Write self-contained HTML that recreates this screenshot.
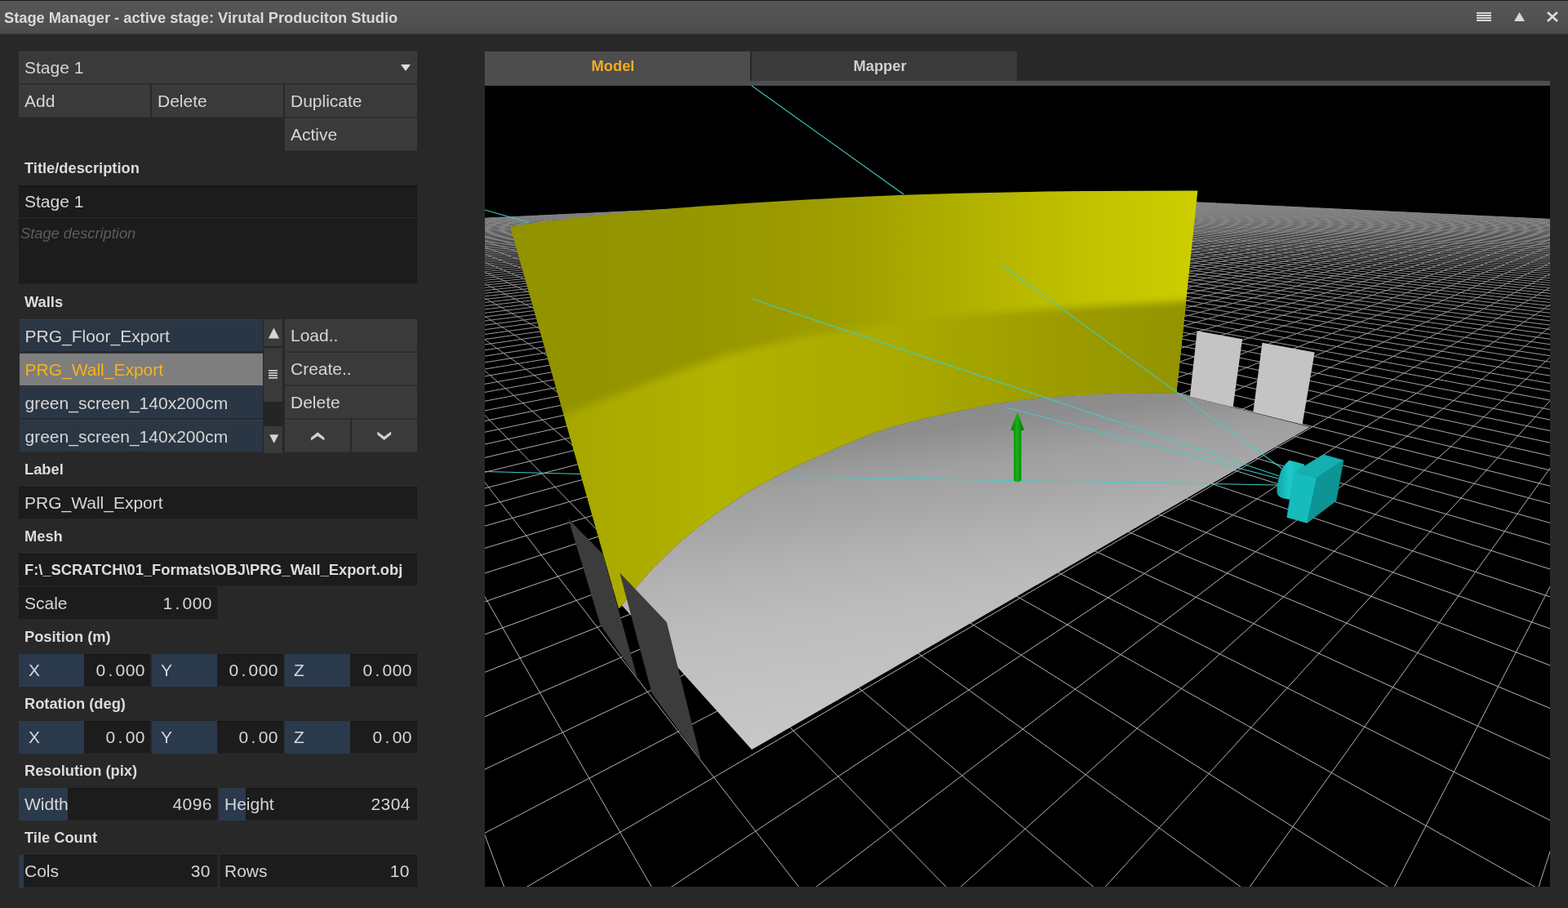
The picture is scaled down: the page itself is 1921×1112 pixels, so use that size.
<!DOCTYPE html>
<html><head><meta charset="utf-8"><title>Stage Manager</title>
<style>
*{box-sizing:border-box;margin:0;padding:0}
html,body{width:1921px;height:1112px;overflow:hidden;background:#282828}
body{position:relative;will-change:transform;-webkit-font-smoothing:antialiased;font-family:"Liberation Sans",sans-serif;font-size:21px;color:#d6d6d6}
.abs,.btn,.inp,.lbl,.li,.cell{position:absolute;white-space:pre;overflow:hidden}
#titlebar{left:0;top:0;width:1921px;height:41px;background:linear-gradient(#575757,#4c4c4c);border-top:1px solid #1a1a1a;box-shadow:0 1px 1px #3a3a3a}
#titlebar .t{position:absolute;left:5px;top:0;line-height:41px;font-weight:bold;font-size:18.3px;color:#dadada}
.btn{height:40px;line-height:39px;background:#3a3a3a;padding-left:7px;box-shadow:inset 0 1px 0 #414141,inset 0 -1px 0 #313131}
.inp{height:40px;line-height:39px;background:#1c1c1c;padding-left:7px;box-shadow:inset 0 1px 1px #171717,inset 0 -1px 0 #252525}
.lbl{left:30px;height:41px;line-height:40px;font-weight:bold;font-size:18.3px;color:#dcdcdc}
.li{left:24px;width:298px;height:40px;line-height:40px;background:#2b3644;padding-left:6.5px;border-top:1px solid #323e4d;border-bottom:1px solid #222b36}
.li.sel{background:#7e7e7e;color:#f7b21a;border-color:#2b3644 #7e7e7e #7e7e7e}
.cell{height:39px;line-height:39px}
.cell.b{height:40px}
.cell.b{background:#2a3a4c}
.num{text-align:right;padding-right:6px;padding-left:0}
.d{display:inline-block;width:12px;text-align:center}
.n{letter-spacing:.45px}
svg{position:absolute;display:block}
</style></head><body>
<div id="titlebar" class="abs"><span class="t">Stage Manager - active stage: Virutal Produciton Studio</span>
<svg style="left:1808px;top:12px" width="104" height="16" viewBox="0 0 104 16">
<g fill="#d8d8d8"><rect x="1" y="2" width="18" height="2"/><rect x="1" y="5" width="18" height="2"/><rect x="1" y="8" width="18" height="2"/><rect x="1" y="11" width="18" height="2"/>
<path d="M47 13 L53.5 2 L60 13Z"/></g>
<path d="M88 2 L100 13 M100 2 L88 13" stroke="#dcdcdc" stroke-width="2.6" fill="none"/></svg>
</div>

<!-- stage selector -->
<div class="btn" style="left:23px;top:63px;width:488px">Stage 1</div>
<svg style="left:490px;top:78px" width="14" height="10" viewBox="0 0 14 10"><path d="M1 1 L13 1 L7 9Z" fill="#dcdcdc"/></svg>
<div class="btn" style="left:23px;top:104px;width:161px">Add</div>
<div class="btn" style="left:186px;top:104px;width:161px">Delete</div>
<div class="btn" style="left:349px;top:104px;width:162px">Duplicate</div>
<div class="btn" style="left:349px;top:145px;width:162px">Active</div>

<div class="lbl" style="top:186px">Title/description</div>
<div class="inp" style="left:23px;top:227px;width:488px">Stage 1</div>
<div class="inp" style="left:23px;top:268px;width:488px;height:80px;padding-left:2px;line-height:36px;font-style:italic;font-size:18.3px;color:#5c5c5c">Stage description</div>

<div class="lbl" style="top:350px">Walls</div>
<div class="li" style="top:391px">PRG_Floor_Export</div>
<div class="li sel" style="top:432px">PRG_Wall_Export</div>
<div class="li" style="top:473px">green_screen_140x200cm</div>
<div class="li" style="top:514px">green_screen_140x200cm</div>
<!-- scrollbar -->
<div class="abs" style="left:322px;top:391px;width:25px;height:164px;background:#252525"></div>
<div class="abs" style="left:323px;top:391px;width:23px;height:33px;background:#3a3a3a"></div>
<div class="abs" style="left:323px;top:426px;width:23px;height:66px;background:#3a3a3a"></div>
<div class="abs" style="left:323px;top:522px;width:23px;height:33px;background:#3a3a3a"></div>
<svg style="left:323px;top:391px" width="23" height="164" viewBox="0 0 23 164">
<g fill="#d4d4d4"><path d="M5.8 23.5 L12.5 10.5 L19.2 23.5Z"/><path d="M7.2 141.3 L18.2 141.3 L12.7 152Z"/>
<rect x="6" y="62" width="11" height="1.6"/><rect x="6" y="65" width="11" height="1.6"/><rect x="6" y="68" width="11" height="1.6"/><rect x="6" y="71" width="11" height="1.6"/></g></svg>

<div class="btn" style="left:349px;top:391px;width:162px">Load..</div>
<div class="btn" style="left:349px;top:432px;width:162px">Create..</div>
<div class="btn" style="left:349px;top:473px;width:162px">Delete</div>
<div class="btn" style="left:349px;top:514px;width:80px"></div>
<div class="btn" style="left:431px;top:514px;width:80px"></div>
<svg style="left:349px;top:514px" width="162" height="39" viewBox="0 0 162 39"><g fill="#d2d2d2"><path d="M31.9 21.9L40.2 15.2L48.4 21.9L48.4 25.4L40.2 19.9L31.9 25.4Z"/><path d="M113.3 14.4L121.6 20.7L130.1 14.4L130.1 18.3L121.6 25.1L113.3 18.3Z"/></g></svg>

<div class="lbl" style="top:555px">Label</div>
<div class="inp" style="left:23px;top:596px;width:488px">PRG_Wall_Export</div>
<div class="lbl" style="top:637px">Mesh</div>
<div class="inp" style="left:23px;top:678px;width:488px;font-weight:bold;font-size:18.3px;line-height:40px;color:#dcdcdc">F:\_SCRATCH\01_Formats\OBJ\PRG_Wall_Export.obj</div>

<div class="inp" style="left:23px;top:719px;width:243px">Scale</div>
<div class="cell num n" style="left:103px;top:719px;width:163px">1<span class="d">.</span>000</div>

<div class="lbl" style="top:760px">Position (m)</div>
<div class="cell b" style="left:23px;top:801px;width:80px;padding-left:12px">X</div>
<div class="inp num n" style="left:103px;top:801px;width:81px">0<span class="d">.</span>000</div>
<div class="cell b" style="left:186px;top:801px;width:80px;padding-left:11px">Y</div>
<div class="inp num n" style="left:266px;top:801px;width:81px">0<span class="d">.</span>000</div>
<div class="cell b" style="left:349px;top:801px;width:80px;padding-left:11px">Z</div>
<div class="inp num n" style="left:429px;top:801px;width:82px">0<span class="d">.</span>000</div>

<div class="lbl" style="top:842px">Rotation (deg)</div>
<div class="cell b" style="left:23px;top:883px;width:80px;padding-left:12px">X</div>
<div class="inp num n" style="left:103px;top:883px;width:81px">0<span class="d">.</span>00</div>
<div class="cell b" style="left:186px;top:883px;width:80px;padding-left:11px">Y</div>
<div class="inp num n" style="left:266px;top:883px;width:81px">0<span class="d">.</span>00</div>
<div class="cell b" style="left:349px;top:883px;width:80px;padding-left:11px">Z</div>
<div class="inp num n" style="left:429px;top:883px;width:82px">0<span class="d">.</span>00</div>

<div class="lbl" style="top:924px">Resolution (pix)</div>
<div class="inp" style="left:23px;top:965px;width:243px"></div>
<div class="cell b" style="left:23px;top:965px;width:60px"></div>
<div class="cell" style="left:30px;top:965px;width:100px">Width</div>
<div class="cell num n" style="left:103px;top:965px;width:163px">4096</div>
<div class="inp" style="left:268px;top:965px;width:243px"></div>
<div class="cell b" style="left:268px;top:965px;width:33px"></div>
<div class="cell" style="left:275px;top:965px;width:100px">Height</div>
<div class="cell num n" style="left:349px;top:965px;width:162px;padding-right:8px">2304</div>

<div class="lbl" style="top:1006px">Tile Count</div>
<div class="inp" style="left:23px;top:1047px;width:243px"></div>
<div class="cell b" style="left:23px;top:1047px;width:6px"></div>
<div class="cell" style="left:30px;top:1047px;width:100px">Cols</div>
<div class="cell num n" style="left:103px;top:1047px;width:163px;padding-right:8px">30</div>
<div class="inp" style="left:270px;top:1047px;width:241px;padding-left:5px">Rows</div>
<div class="cell num n" style="left:349px;top:1047px;width:162px;padding-right:9px">10</div>

<!-- tabs -->
<div class="abs" style="left:594px;top:63px;width:325px;height:39px;background:#4d4d4d;text-align:center;padding-right:11px;line-height:35px;font-weight:bold;font-size:18.3px;color:#f5ae1e">Model</div>
<div class="abs" style="left:921px;top:63px;width:325px;height:36px;background:#3a3a3a;text-align:center;padding-right:11px;line-height:35px;font-weight:bold;font-size:18.3px;color:#d0d0d0">Mapper</div>
<div class="abs" style="left:594px;top:99px;width:1305px;height:6px;background:#4d4d4d"></div>
<!-- viewport -->
<svg style="left:594px;top:105px" width="1305" height="981" viewBox="594 105 1305 981">
<defs>
<linearGradient id="gf" gradientUnits="userSpaceOnUse" x1="81.8" y1="624.7" x2="133.7" y2="1021.3"><stop offset="0" stop-color="#8a8a8a"/><stop offset=".1" stop-color="#8d8d8d"/><stop offset=".175" stop-color="#999"/><stop offset=".225" stop-color="#a0a0a0"/><stop offset=".3" stop-color="#a5a5a5"/><stop offset=".425" stop-color="#b0b0b0"/><stop offset=".51" stop-color="#b6b6b6"/><stop offset=".61" stop-color="#bcbcbc"/><stop offset=".8" stop-color="#c2c2c2"/><stop offset="1" stop-color="#c8c8c8"/></linearGradient>
<linearGradient id="gw" gradientUnits="userSpaceOnUse" x1="625" y1="0" x2="1467" y2="0"><stop offset="0" stop-color="#929200"/><stop offset=".3" stop-color="#969600"/><stop offset=".5" stop-color="#a0a000"/><stop offset=".7" stop-color="#b4b400"/><stop offset=".85" stop-color="#c3c300"/><stop offset="1" stop-color="#cdcd00"/></linearGradient>
<linearGradient id="gs" gradientUnits="userSpaceOnUse" x1="625" y1="0" x2="1467" y2="0"><stop offset="0" stop-color="#a2a200"/><stop offset=".3" stop-color="#b2b200"/><stop offset=".55" stop-color="#aaaa00"/><stop offset=".8" stop-color="#9c9c00"/><stop offset="1" stop-color="#929200"/></linearGradient>
<linearGradient id="gl" gradientUnits="userSpaceOnUse" x1="1566" y1="0" x2="1596" y2="0"><stop offset="0" stop-color="#12a8a8"/><stop offset=".45" stop-color="#1ccaca"/><stop offset="1" stop-color="#16b8b8"/></linearGradient>
<linearGradient id="ga" gradientUnits="userSpaceOnUse" x1="1241" y1="0" x2="1252" y2="0"><stop offset="0" stop-color="#0a8a0a"/><stop offset=".45" stop-color="#14b414"/><stop offset="1" stop-color="#0a860a"/></linearGradient>
<linearGradient id="gg" gradientUnits="userSpaceOnUse" x1="0" y1="240" x2="0" y2="700"><stop offset="0" stop-color="#848484"/><stop offset=".1" stop-color="#868686"/><stop offset=".3" stop-color="#939393"/><stop offset=".6" stop-color="#a8a8a8"/><stop offset="1" stop-color="#b2b2b2"/></linearGradient>
<clipPath id="cw"><path d="M625.0 277.5L670.0 271.0L715.0 265.6L760.0 260.8L800.0 257.0L860.0 252.6L925.0 248.2L988.0 244.5L1050.0 241.2L1107.5 238.8L1175.0 236.8L1280.0 234.5L1328.6 234.0L1400.0 233.8L1467.3 233.6L1441.3 481.3L1409.0 481.3L1386.0 481.5L1364.0 482.0L1341.0 483.0L1318.0 484.0L1295.0 485.5L1272.0 487.5L1250.0 490.0L1228.0 493.0L1205.0 497.0L1183.0 501.5L1160.0 506.5L1138.0 511.0L1116.0 516.5L1090.0 523.5L1064.0 532.5L1040.0 542.5L1012.0 554.5L985.0 566.5L960.0 578.5L937.9 590.5L918.1 601.3L898.3 614.2L878.5 628.1L858.7 642.9L838.9 658.7L819.2 676.6L799.4 696.3L779.6 719.1L762.0 741.5L758 745Z"/></clipPath>
<filter id="bl" x="-10%" y="-20%" width="120%" height="140%"><feGaussianBlur stdDeviation="5"/></filter>
</defs>
<rect x="594" y="105" width="1305" height="981" fill="#000"/>
<path d="M1233.9 236.8L1903.0 268.6M1229.4 237.0L1903.0 269.3M1224.8 237.2L1903.0 270.1M1220.2 237.4L1903.0 270.9M1215.5 237.7L1903.0 271.6M1210.8 237.9L1903.0 272.4M1206.1 238.1L1903.0 273.2M1201.3 238.3L1903.0 274.1M1196.4 238.6L1903.0 274.9M1191.5 238.8L1903.0 275.8M1186.6 239.0L1903.0 276.7M1181.6 239.3L1903.0 277.6M1176.6 239.5L1903.0 278.5M1171.5 239.8L1903.0 279.4M1166.3 240.0L1903.0 280.4M1161.1 240.3L1903.0 281.4M1155.9 240.5L1903.0 282.4M1150.5 240.8L1903.0 283.4M1145.2 241.0L1903.0 284.5M1139.8 241.3L1903.0 285.5M1134.3 241.5L1903.0 286.6M1128.7 241.8L1903.0 287.8M1123.1 242.1L1903.0 288.9M1117.5 242.3L1903.0 290.1M1111.8 242.6L1903.0 291.3M1106.0 242.9L1903.0 292.6M1100.1 243.2L1903.0 293.8M1094.2 243.4L1903.0 295.1M1088.3 243.7L1903.0 296.5M1082.2 244.0L1903.0 297.8M1076.1 244.3L1903.0 299.3M1069.9 244.6L1903.0 300.7M1063.7 244.9L1903.0 302.2M1057.4 245.2L1903.0 303.7M1051.0 245.5L1903.0 305.3M1044.5 245.8L1903.0 306.9M1038.0 246.1L1903.0 308.6M1031.3 246.4L1903.0 310.3M1024.7 246.7L1903.0 312.1M1017.9 247.1L1903.0 313.9M1011.0 247.4L1903.0 315.8M1004.1 247.7L1903.0 317.7M997.1 248.1L1903.0 319.7M990.0 248.4L1903.0 321.8M982.8 248.7L1903.0 323.9M975.5 249.1L1903.0 326.1M968.1 249.4L1903.0 328.4M960.7 249.8L1903.0 330.8M953.1 250.1L1903.0 333.2M945.5 250.5L1903.0 335.7M937.7 250.9L1903.0 338.3M929.9 251.2L1903.0 341.1M921.9 251.6L1903.0 343.9M913.9 252.0L1903.0 346.8M905.8 252.4L1903.0 349.8M897.5 252.8L1903.0 353.0M889.1 253.2L1903.0 356.3M880.7 253.6L1903.0 359.7M872.1 254.0L1903.0 363.3M863.4 254.4L1903.0 367.0M854.6 254.8L1903.0 370.9M845.6 255.3L1903.0 375.0M836.6 255.7L1903.0 379.3M827.4 256.1L1903.0 383.8M818.1 256.6L1903.0 388.5M808.6 257.0L1903.0 393.4M799.1 257.5L1903.0 398.6M789.3 257.9L1903.0 404.0M779.5 258.4L1903.0 409.8M769.5 258.9L1903.0 415.8M759.4 259.4L1903.0 422.3M749.1 259.8L1903.0 429.1M738.7 260.3L1903.0 436.3M728.1 260.8L1903.0 443.9M717.3 261.4L1903.0 452.1M706.4 261.9L1903.0 460.8M695.4 262.4L1903.0 470.1M684.1 262.9L1903.0 480.1M672.7 263.5L1903.0 490.8M661.1 264.0L1903.0 502.4M649.4 264.6L1903.0 514.9M637.4 265.2L1903.0 528.4M625.3 265.7L1903.0 543.1M613.0 266.3L1903.0 559.2M600.4 266.9L1903.0 576.8M590.0 268.1L1903.0 596.2M590.0 272.1L1903.0 617.7M590.0 276.6L1903.0 641.5M590.0 281.7L1903.0 668.2M590.0 287.4L1903.0 698.2M590.0 293.8L1903.0 732.3M590.0 301.2L1903.0 771.3M590.0 309.7L1903.0 816.4M590.0 319.7L1903.0 869.1M590.0 331.4L1903.0 931.5M590.0 345.6L1903.0 1006.6M590.0 363.0L1887.6 1090.0M590.0 384.8L1706.5 1090.0M590.0 413.0L1525.3 1090.0M590.0 450.9L1344.1 1090.0M590.0 504.4L1162.9 1090.0M590.0 585.6L981.7 1090.0M590.0 723.9L800.4 1090.0M590.0 1011.9L619.1 1090.0M1233.9 236.8L590.0 267.4M1238.4 237.0L590.0 268.1M1242.9 237.2L590.0 268.9M1247.5 237.4L590.0 269.6M1252.1 237.7L590.0 270.4M1256.8 237.9L590.0 271.2M1261.5 238.1L590.0 272.0M1266.2 238.3L590.0 272.8M1271.0 238.6L590.0 273.6M1275.9 238.8L590.0 274.5M1280.8 239.0L590.0 275.3M1285.7 239.3L590.0 276.2M1290.7 239.5L590.0 277.1M1295.8 239.7L590.0 278.0M1300.9 240.0L590.0 279.0M1306.0 240.2L590.0 279.9M1311.2 240.5L590.0 280.9M1316.5 240.7L590.0 281.9M1321.8 241.0L590.0 283.0M1327.1 241.2L590.0 284.0M1332.6 241.5L590.0 285.1M1338.0 241.7L590.0 286.2M1343.6 242.0L590.0 287.3M1349.1 242.3L590.0 288.5M1354.8 242.5L590.0 289.7M1360.5 242.8L590.0 290.9M1366.3 243.1L590.0 292.1M1372.1 243.4L590.0 293.4M1378.0 243.6L590.0 294.7M1384.0 243.9L590.0 296.0M1390.0 244.2L590.0 297.4M1396.1 244.5L590.0 298.8M1402.2 244.8L590.0 300.3M1408.5 245.1L590.0 301.8M1414.8 245.4L590.0 303.3M1421.1 245.7L590.0 304.9M1427.6 246.0L590.0 306.5M1434.1 246.3L590.0 308.2M1440.7 246.6L590.0 309.9M1447.4 246.9L590.0 311.7M1454.1 247.3L590.0 313.5M1460.9 247.6L590.0 315.4M1467.8 247.9L590.0 317.4M1474.8 248.2L590.0 319.4M1481.9 248.6L590.0 321.4M1489.0 248.9L590.0 323.6M1496.3 249.3L590.0 325.8M1503.6 249.6L590.0 328.1M1511.0 250.0L590.0 330.4M1518.5 250.3L590.0 332.9M1526.1 250.7L590.0 335.4M1533.8 251.0L590.0 338.1M1541.6 251.4L590.0 340.8M1549.5 251.8L590.0 343.6M1557.4 252.2L590.0 346.6M1565.5 252.6L590.0 349.6M1573.7 252.9L590.0 352.8M1582.0 253.3L590.0 356.1M1590.4 253.7L590.0 359.6M1598.9 254.1L590.0 363.2M1607.5 254.6L590.0 366.9M1616.3 255.0L590.0 370.9M1625.1 255.4L590.0 375.0M1634.1 255.8L590.0 379.3M1643.2 256.2L590.0 383.8M1652.4 256.7L590.0 388.5M1661.7 257.1L590.0 393.5M1671.2 257.6L590.0 398.7M1680.8 258.0L590.0 404.2M1690.5 258.5L590.0 410.0M1700.4 259.0L590.0 416.1M1710.4 259.4L590.0 422.6M1720.5 259.9L590.0 429.4M1730.8 260.4L590.0 436.7M1741.3 260.9L590.0 444.5M1751.9 261.4L590.0 452.7M1762.6 261.9L590.0 461.5M1773.5 262.4L590.0 471.0M1784.6 263.0L590.0 481.1M1795.9 263.5L590.0 492.0M1807.3 264.0L590.0 503.7M1818.8 264.6L590.0 516.3M1830.6 265.2L590.0 530.1M1842.5 265.7L590.0 545.0M1854.7 266.3L590.0 561.4M1867.0 266.9L590.0 579.3M1879.5 267.5L590.0 599.0M1892.2 268.1L590.0 620.9M1903.0 269.3L590.0 645.3M1903.0 274.0L590.0 672.6M1903.0 279.2L590.0 703.3M1903.0 285.1L590.0 738.3M1903.0 292.0L590.0 778.4M1903.0 299.9L590.0 824.9M1903.0 309.2L590.0 879.4M1903.0 320.2L590.0 944.1M1903.0 333.5L590.0 1022.3M1903.0 349.9L638.9 1090.0M1903.0 370.6L816.8 1090.0M1903.0 397.5L994.7 1090.0M1903.0 434.1L1172.6 1090.0M1903.0 486.4L1350.4 1090.0M1903.0 567.7L1528.3 1090.0M1903.0 710.8L1706.1 1090.0M1903.0 1030.4L1883.9 1090.0" stroke="url(#gg)" stroke-width="1" fill="none"/>
<path d="M1466.6 405.2L1522 415.3L1510.6 498.8L1457.8 485.8Z M1546.4 419.8L1610.6 431.6L1595.5 519.7L1535.3 504.6Z" fill="#c4c4c4"/>
<path d="M762.0 741.5L779.6 719.1L799.4 696.3L819.2 676.6L838.9 658.7L858.7 642.9L878.5 628.1L898.3 614.2L918.1 601.3L937.9 590.5L960.0 578.5L985.0 566.5L1012.0 554.5L1040.0 542.5L1064.0 532.5L1090.0 523.5L1116.0 516.5L1138.0 511.0L1160.0 506.5L1183.0 501.5L1205.0 497.0L1228.0 493.0L1250.0 490.0L1272.0 487.5L1295.0 485.5L1318.0 484.0L1341.0 483.0L1364.0 482.0L1386.0 481.5L1409.0 481.3L1441.3 481.3L1605 523L921 918Z" fill="url(#gf)"/>
<path d="M625.0 277.5L670.0 271.0L715.0 265.6L760.0 260.8L800.0 257.0L860.0 252.6L925.0 248.2L988.0 244.5L1050.0 241.2L1107.5 238.8L1175.0 236.8L1280.0 234.5L1328.6 234.0L1400.0 233.8L1467.3 233.6L1441.3 481.3L1409.0 481.3L1386.0 481.5L1364.0 482.0L1341.0 483.0L1318.0 484.0L1295.0 485.5L1272.0 487.5L1250.0 490.0L1228.0 493.0L1205.0 497.0L1183.0 501.5L1160.0 506.5L1138.0 511.0L1116.0 516.5L1090.0 523.5L1064.0 532.5L1040.0 542.5L1012.0 554.5L985.0 566.5L960.0 578.5L937.9 590.5L918.1 601.3L898.3 614.2L878.5 628.1L858.7 642.9L838.9 658.7L819.2 676.6L799.4 696.3L779.6 719.1L762.0 741.5L758 745Z" fill="url(#gw)"/>
<g clip-path="url(#cw)"><path d="M1500 368L1451 369L1295 377.4L1172 387L1086 397L988 412L891 434L794 468L697 506L560 565L560 900L1500 900Z" fill="url(#gs)" filter="url(#bl)"/></g>
<path d="M696.2 635.3L738.7 678.7L781.2 831.4L735.6 765.3Z M759.2 701.4L816.8 762.1L859 932.1L798.5 848.7Z" fill="#3c3c3c"/>
<path d="M921 105L1107 238M594 257L648 272.5M594 577.5L712 580.5M921 366L1567 583M1226 324L1571 574M1234 499.3L1566 586M971 584L1100 586L1565 594" stroke="#3ccfc8" stroke-width="1.05" fill="none"/>
<path d="M1242 526.5H1251.2V588.5Q1246.6 592 1242 588.5Z M1246.5 504.6L1254.8 526.5Q1246.5 530 1238.2 526.5Z" fill="url(#ga)"/>
<path d="M1579.6 563.7Q1570.5 571 1567.8 581.6Q1563.6 594 1564.6 604Q1566 610.5 1578.6 611.4L1592 613L1598 568.5Z" fill="url(#gl)"/>
<path d="M1585.6 578.6L1621.2 556.8L1645.9 563.7L1613.3 585.5Z" fill="#14b0b0" stroke="#14b0b0" stroke-width=".6"/>
<path d="M1585.6 578.6L1613.3 585.5L1601.4 640.4L1576.7 633.5Z" fill="#16bcbc" stroke="#16bcbc" stroke-width=".6"/>
<path d="M1613.3 585.5L1645.9 563.7L1637 613.2L1601.4 640.4Z" fill="#0e9494" stroke="#0e9494" stroke-width=".6"/>
</svg>
</body></html>
